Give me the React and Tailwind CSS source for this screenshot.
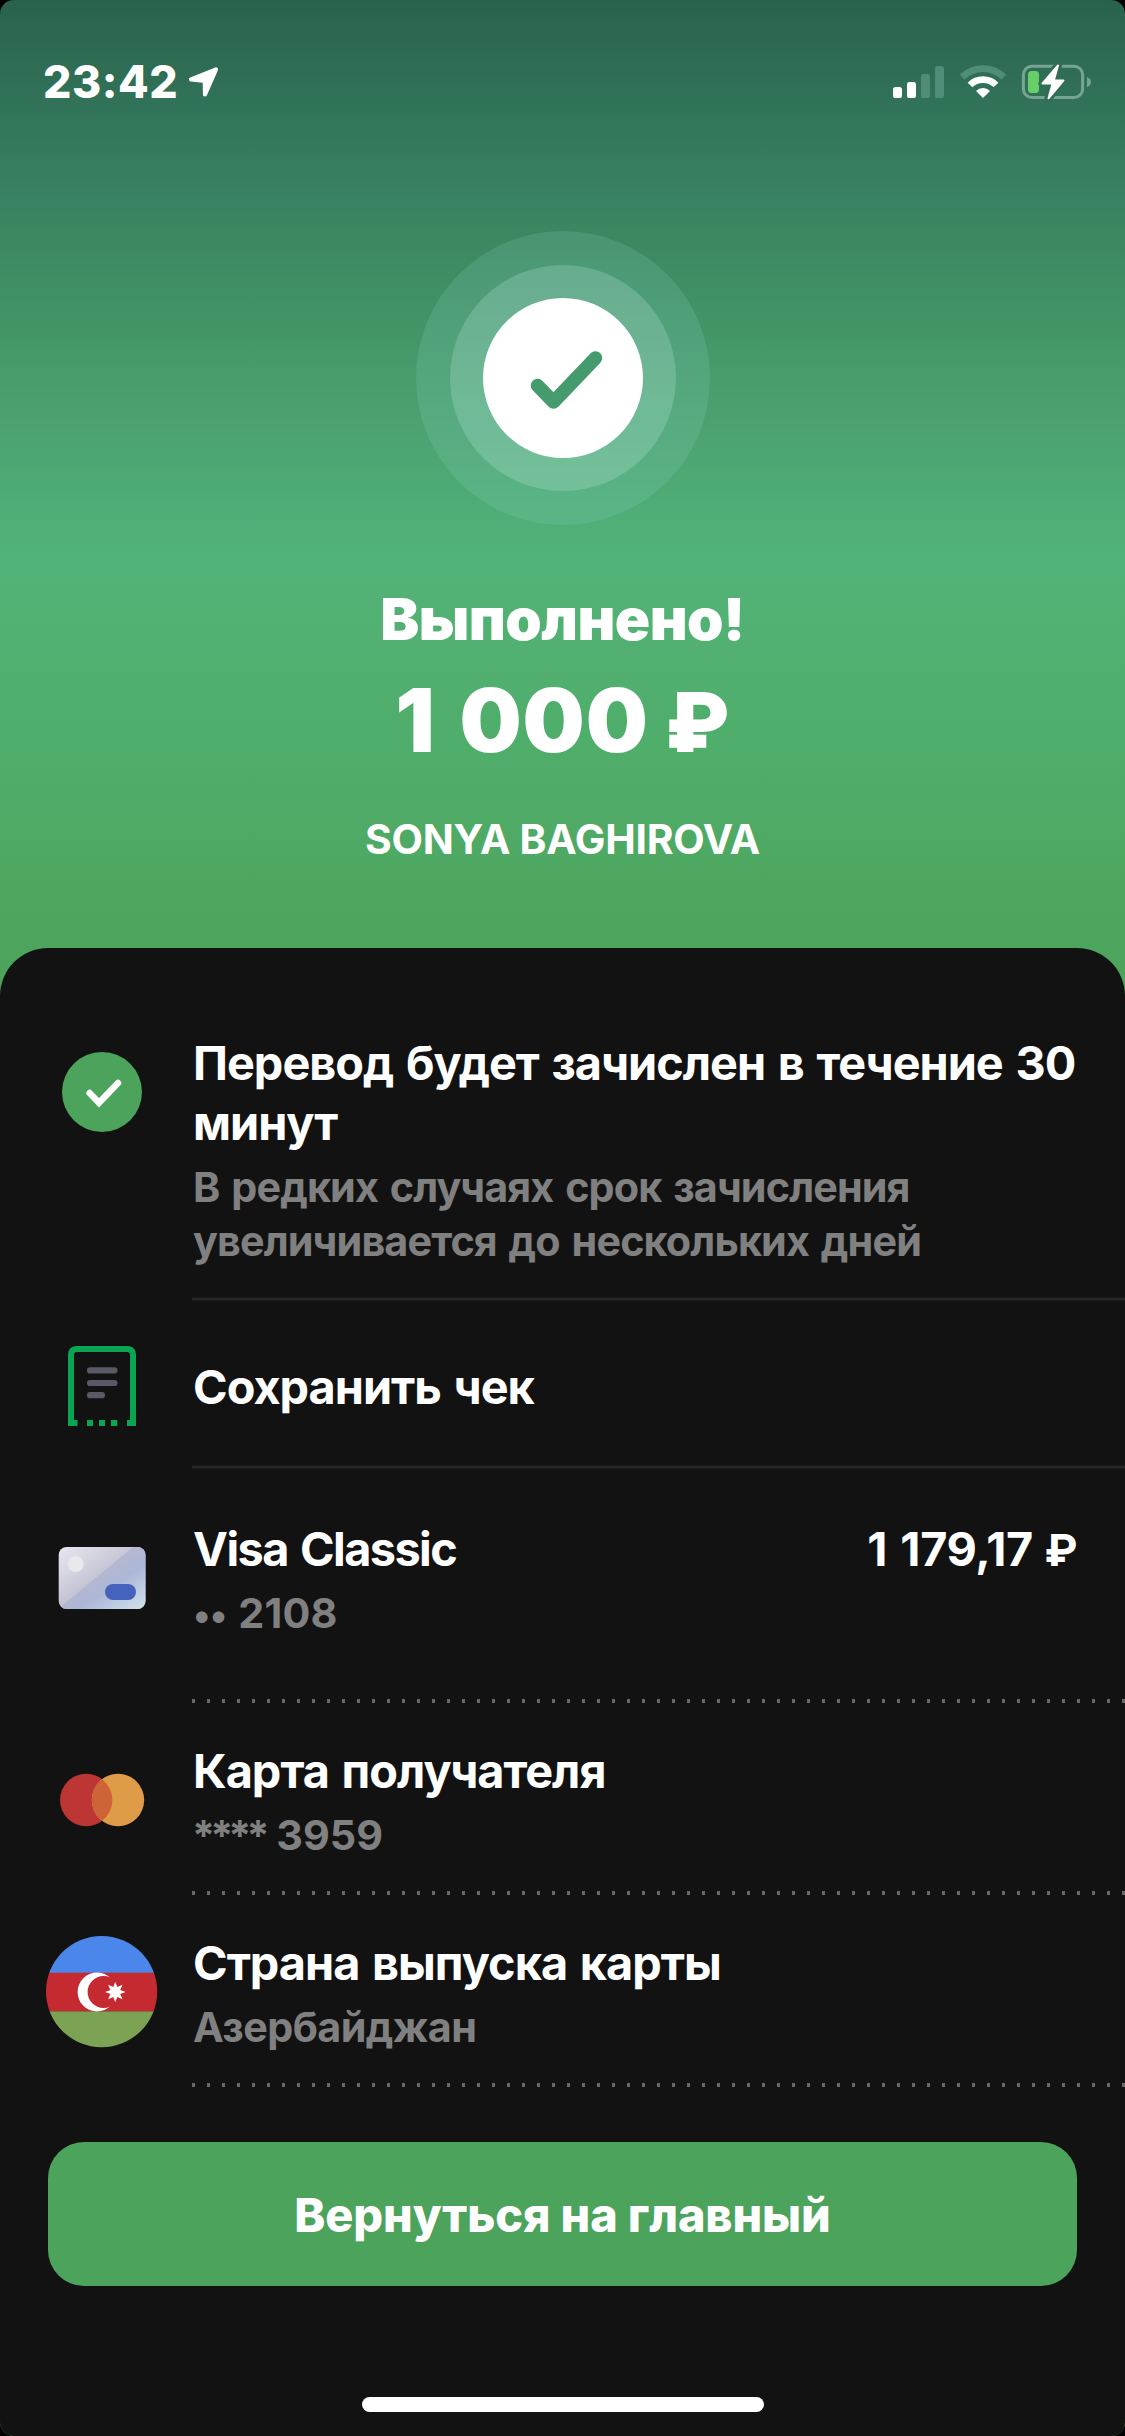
import React from 'react';

const StatusBar = () => (
  <div className="flex h-[132px] items-start justify-between pt-[58px] pr-[32px] pl-[43px] text-white">
    <div className="flex items-start">
      <span className="w-[144px] text-[44.6px] leading-[48px] font-extrabold tracking-[0.012em] whitespace-nowrap">23:42</span>
      <svg className="mt-[7px]" width="34" height="34" viewBox="187 65 34 34">
        <path
          d="M216 69.4L191 79.4L204.8 80.8L205 94.4Z"
          fill="#fff"
          stroke="#fff"
          strokeWidth="4.2"
          strokeLinejoin="round"
        />
      </svg>
    </div>

    <svg width="204" height="44" viewBox="889 58 204 44">
      <g fill="#fff">
        <rect x="893" y="87" width="9" height="11" rx="2.6" />
        <rect x="907" y="82" width="9" height="16" rx="2.6" />
      </g>
      <g fill="#4f8d78">
        <rect x="921" y="74" width="9" height="24" rx="2.6" />
        <rect x="935" y="66" width="9" height="32" rx="2.6" />
      </g>

      {/* wifi */}
      <g fill="none" strokeWidth="6.6">
        <path d="M962.2 77.2A29.6 29.6 0 0 1 1003.8 77.2" stroke="#4f8d78" />
        <path d="M970 85A18.4 18.4 0 0 1 996 85" stroke="#fff" />
      </g>
      <path d="M983 98L976 91A9.9 9.9 0 0 1 990 91Z" fill="#fff" />

      {/* battery */}
      <rect x="1023.4" y="66.3" width="59.2" height="31.2" rx="8.5" fill="none" stroke="#77a594" strokeWidth="3" />
      <path d="M1087 77Q1091 78.6 1091 82.1Q1091 85.6 1087 87.3Z" fill="#77a594" />
      <rect x="1028" y="71" width="11" height="22" rx="3.6" fill="#66cf67" />
      <path
        d="M1058 66L1042.5 83.4H1052.6L1048.5 98L1063.5 80.4H1053.8Z"
        fill="#2f6e54"
        stroke="#2f6e54"
        strokeWidth="8"
        strokeLinejoin="round"
      />
      <path
        d="M1058 65.5L1042.5 83.4H1052.6L1048.5 98.3L1063.5 80.4H1053.8Z"
        fill="#fff"
        stroke="#fff"
        strokeWidth="2"
        strokeLinejoin="round"
      />
    </svg>
  </div>
);

const SuccessBadge = () => (
  <div className="mx-auto mt-[99px] flex size-[294px] items-center justify-center rounded-full bg-[rgba(150,220,205,0.17)]">
    <div className="flex size-[226px] items-center justify-center rounded-full bg-[rgba(225,255,255,0.19)]">
      <div className="flex size-[160px] items-center justify-center rounded-full bg-white">
        <svg width="80" height="66" viewBox="523 345 80 66">
          <path
            d="M537.5 385.5L553.5 402L595.5 358"
            fill="none"
            stroke="#469b6e"
            strokeWidth="13.5"
            strokeLinecap="round"
            strokeLinejoin="round"
          />
        </svg>
      </div>
    </div>
  </div>
);

const DoneIcon = () => (
  <svg width="120" height="120" viewBox="42 1032 120 120">
    <circle cx="102" cy="1092" r="40" fill="#4ca35b" />
    <path d="M89.6 1093L99 1102.8L118 1083" fill="none" stroke="#fff" strokeWidth="6.4" strokeLinecap="round" />
  </svg>
);

const ReceiptIcon = () => (
  <svg className="-mt-[30px]" width="120" height="120" viewBox="42 1326 120 120">
    <path d="M77.5 1423H71V1355Q71 1349 77 1349H127Q133 1349 133 1355V1423H127" fill="none" stroke="#09a552" strokeWidth="6" />
    <path d="M87 1423H93M99 1423H105M111 1423H117.3" stroke="#09a552" strokeWidth="6" />
    <path d="M90 1370.4H114.4M90 1383H114.4M90 1395.2H102" stroke="#595966" strokeWidth="6.2" strokeLinecap="round" />
  </svg>
);

const CardIcon = () => (
  <svg width="120" height="120" viewBox="42 1518 120 120">
    <defs>
      <linearGradient id="cardBase" x1="0" y1="0" x2="1" y2="1">
        <stop offset="0" stopColor="#e9e8f0" />
        <stop offset="0.5" stopColor="#c3c2d2" />
        <stop offset="1" stopColor="#aeb3cf" />
      </linearGradient>
      <linearGradient id="cardShine" x1="0.35" y1="0.3" x2="1" y2="1">
        <stop offset="0" stopColor="#bab8cf" />
        <stop offset="0.45" stopColor="#acb7d6" />
        <stop offset="1" stopColor="#d3e4ee" />
      </linearGradient>
      <clipPath id="cardClip">
        <rect x="58.7" y="1547" width="86.8" height="62" rx="8" />
      </clipPath>
    </defs>
    <g clipPath="url(#cardClip)">
      <rect x="58" y="1547" width="88" height="62" fill="url(#cardBase)" />
      <path d="M133 1547H146V1609H58Z" fill="url(#cardShine)" />
    </g>
    <circle cx="75.7" cy="1564" r="8" fill="#e9e9ed" />
    <rect x="105" y="1584" width="31" height="16" rx="8" fill="#4563bd" />
  </svg>
);

const MastercardIcon = () => (
  <svg width="120" height="120" viewBox="42 1740 120 120">
    <circle cx="86.2" cy="1800" r="26.2" fill="#be3634" />
    <circle cx="118" cy="1800" r="26.2" fill="#de9b48" />
    <path d="M102.1 1779.2A26.2 26.2 0 0 1 102.1 1820.8A26.2 26.2 0 0 1 102.1 1779.2Z" fill="#cf6338" />
  </svg>
);

const FlagIcon = () => (
  <svg width="120" height="120" viewBox="42 1932 120 120">
    <clipPath id="flagClip">
      <circle cx="101.6" cy="1991.6" r="55.6" />
    </clipPath>
    <g clipPath="url(#flagClip)">
      <rect x="42" y="1932" width="120" height="41" fill="#4b87ea" />
      <rect x="42" y="1972.7" width="120" height="39" fill="#c52a31" />
      <rect x="42" y="2011.4" width="120" height="41" fill="#7ba353" />
    </g>
    <circle cx="97" cy="1992" r="19.4" fill="#fff" />
    <circle cx="103.6" cy="1992" r="16" fill="#c52a31" />
    <path
      d="M115.3 1981.8L117.3 1987.1L122.5 1984.8L120.2 1990L125.5 1992L120.2 1994L122.5 1999.2L117.3 1996.9L115.3 2002.2L113.3 1996.9L108.1 1999.2L110.4 1994L105.1 1992L110.4 1990L108.1 1984.8L113.3 1987.1Z"
      fill="#fff"
    />
  </svg>
);

const SolidLine = () => <div className="ml-[150px] h-[4px] shrink-0 border-y border-[#1b1b1b] bg-[#262626]" />;

const DottedLine = () => (
  <div className="ml-[150px] h-[4px] shrink-0 bg-[repeating-linear-gradient(90deg,#686868_0_3px,transparent_3px_15px)]" />
);

const Row = ({ icon, title, subtitle, amount, line, className }) => (
  <div className={`flex flex-col pl-[42px] ${className}`}>
    <div className="flex flex-1 items-start">
      <div className="-mt-px w-[151px] shrink-0">{icon}</div>
      <div className="flex flex-1 flex-col gap-[7px]">
        <div className="flex justify-between pr-[48px] text-[46.8px] leading-[60px] font-[650] tracking-[-0.021em] text-white [word-spacing:0.055em]">
          <p className="whitespace-pre">{title}</p>
          {amount && (
            <p className="tracking-[-0.008em] whitespace-nowrap">
              {amount} <span className="-ml-[0.04em] text-[0.95em] leading-none">₽</span>
            </p>
          )}
        </div>
        {subtitle && (
          <p className="text-[41.3px] leading-[54px] font-[650] tracking-[-0.021em] whitespace-pre text-[#808080] [word-spacing:0.07em]">
            {subtitle}
          </p>
        )}
      </div>
    </div>
    {line === 'solid' ? <SolidLine /> : <DottedLine />}
  </div>
);

const App = () => {
  return (
    <div className="h-[2436px] w-[1125px] overflow-hidden bg-black font-['Inter',sans-serif]">
      <div className="flex h-full flex-col overflow-hidden rounded-[14px] bg-[linear-gradient(180deg,#29624c_0px,#398263_200px,#3b8760_230px,#499f6e_400px,#52b37a_560px,#52b275_595px,#4fac68_784px,#4ca35b_980px)]">
        <StatusBar />
        <SuccessBadge />

        <div className="flex flex-1 flex-col">
          <div className="flex h-[423px] flex-col items-center text-center text-white">
            <h1 className="mt-[58px] text-[58.4px] leading-[72px] font-black tracking-[-0.009em]">Выполнено!</h1>
            <p className="mt-[15px] text-[87.5px] leading-[100px] font-black tracking-[0.011em] whitespace-nowrap">
              <span className="[word-spacing:0.06em]">1 000</span>{' '}
              <span className="-ml-[0.03em] text-[0.94em] leading-none">₽</span>
            </p>
            <p className="mt-[44px] text-[40.8px] leading-[50px] font-[650] tracking-[-0.006em]">SONYA BAGHIROVA</p>
          </div>

          <div className="flex flex-1 flex-col rounded-t-[48px] bg-[#121212]">
            <Row
              className="h-[353px] pt-[85px]"
              icon={<DoneIcon />}
              title={'Перевод будет зачислен в течение 30\nминут'}
              subtitle={'В редких случаях срок зачисления\nувеличивается до нескольких дней'}
              line="solid"
            />
            <Row className="h-[168px] pt-[56px]" icon={<ReceiptIcon />} title="Сохранить чек" line="solid" />
            <Row
              className="h-[234px] pt-[50px]"
              icon={<CardIcon />}
              title={<span className="tracking-[-0.033em]">Visa Classic</span>}
              subtitle={
                <>
                  <span className="text-[37px] leading-none">••</span> <span className="tracking-[0.005em]">2108</span>
                </>
              }
              amount="1 179,17"
            />
            <Row
              className="h-[192px] pt-[38px]"
              icon={<MastercardIcon />}
              title="Карта получателя"
              subtitle={
                <>
                  <span className="-ml-px tracking-[-0.12em]">****</span> <span className="tracking-normal">3959</span>
                </>
              }
            />
            <Row
              className="h-[192px] pt-[38px]"
              icon={<FlagIcon />}
              title="Страна выпуска карты"
              subtitle={<span className="tracking-[-0.014em]">Азербайджан</span>}
            />

            <button className="mx-[48px] mt-[55px] h-[144px] rounded-[36px] bg-[#4ca35b] pt-[2px] text-[46.8px] font-extrabold tracking-[-0.002em] text-white">
              Вернуться на главный
            </button>
            <div className="mx-auto mt-[111px] h-[15px] w-[402px] rounded-full bg-white" />
          </div>
        </div>
      </div>
    </div>
  );
};

export default App;
